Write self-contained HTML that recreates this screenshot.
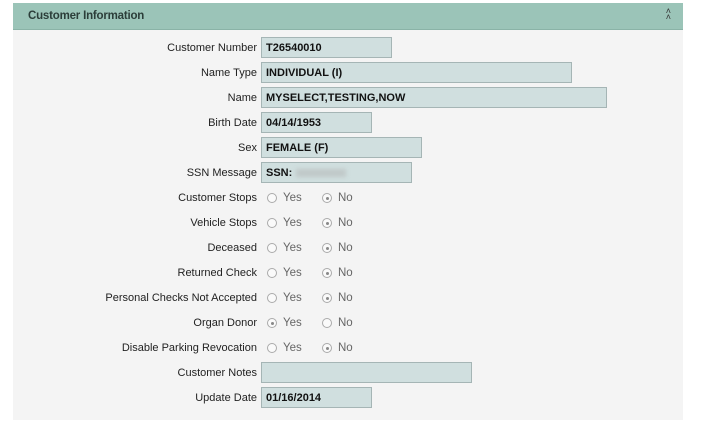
<!DOCTYPE html>
<html><head><meta charset="utf-8"><style>
html,body{margin:0;padding:0;background:#fff;width:702px;height:433px;overflow:hidden;font-family:"Liberation Sans",sans-serif;}
.panel{position:absolute;left:13px;top:3px;width:670px;height:417px;background:#f4f4f4;}
.hdr{height:26px;background:#9bc4b8;border-bottom:1px solid #8ab3a7;position:relative;}
.hdr span{position:absolute;left:15px;top:7px;font-size:11.5px;font-weight:bold;color:#2c3e3a;letter-spacing:-0.2px;}
.hdr i{position:absolute;right:12px;top:5px;font-style:normal;font-size:9px;color:#333;line-height:6px;}
.row{position:absolute;left:0;width:670px;height:21px;}
.lbl{position:absolute;left:4px;width:240px;text-align:right;font-size:11px;color:#222;top:5px;white-space:nowrap;}
.inp{position:absolute;left:248px;top:0;background:#d0dfdf;border:1px solid #a5b5b5;font-size:11px;font-weight:bold;color:#111;line-height:20px;padding-left:4px;box-sizing:border-box;height:21px;}
.rad{position:absolute;top:6px;width:10px;height:10px;border:1px solid #aaa;border-radius:50%;background:#fafafa;box-sizing:border-box;}
.rad.on::after{content:"";position:absolute;left:2.5px;top:2.5px;width:3px;height:3px;border-radius:50%;background:#888;}
.rt{position:absolute;top:5px;font-size:11.5px;color:#666;}
.blur{display:inline-block;width:50px;height:8px;background:#c0c8c8;filter:blur(2px);vertical-align:middle;margin-left:4px;}
</style></head><body>
<div class="panel">
<div class="hdr"><span>Customer Information</span><i>˄<br>˄</i></div>
<div class="row" style="top:34px"><div class="lbl">Customer Number</div><div class="inp" style="width:131px">T26540010</div></div>
<div class="row" style="top:59px"><div class="lbl">Name Type</div><div class="inp" style="width:311px">INDIVIDUAL (I)</div></div>
<div class="row" style="top:84px"><div class="lbl">Name</div><div class="inp" style="width:346px">MYSELECT,TESTING,NOW</div></div>
<div class="row" style="top:109px"><div class="lbl">Birth Date</div><div class="inp" style="width:111px">04/14/1953</div></div>
<div class="row" style="top:134px"><div class="lbl">Sex</div><div class="inp" style="width:161px">FEMALE (F)</div></div>
<div class="row" style="top:159px"><div class="lbl">SSN Message</div><div class="inp" style="width:151px">SSN:<span class="blur"></span></div></div>

<div class="row" style="top:184px"><div class="lbl">Customer Stops</div><div class="rad" style="left:254px"></div><div class="rt" style="left:270px">Yes</div><div class="rad on" style="left:309px"></div><div class="rt" style="left:325px">No</div></div>
<div class="row" style="top:209px"><div class="lbl">Vehicle Stops</div><div class="rad" style="left:254px"></div><div class="rt" style="left:270px">Yes</div><div class="rad on" style="left:309px"></div><div class="rt" style="left:325px">No</div></div>
<div class="row" style="top:234px"><div class="lbl">Deceased</div><div class="rad" style="left:254px"></div><div class="rt" style="left:270px">Yes</div><div class="rad on" style="left:309px"></div><div class="rt" style="left:325px">No</div></div>
<div class="row" style="top:259px"><div class="lbl">Returned Check</div><div class="rad" style="left:254px"></div><div class="rt" style="left:270px">Yes</div><div class="rad on" style="left:309px"></div><div class="rt" style="left:325px">No</div></div>
<div class="row" style="top:284px"><div class="lbl">Personal Checks Not Accepted</div><div class="rad" style="left:254px"></div><div class="rt" style="left:270px">Yes</div><div class="rad on" style="left:309px"></div><div class="rt" style="left:325px">No</div></div>
<div class="row" style="top:309px"><div class="lbl">Organ Donor</div><div class="rad on" style="left:254px"></div><div class="rt" style="left:270px">Yes</div><div class="rad" style="left:309px"></div><div class="rt" style="left:325px">No</div></div>
<div class="row" style="top:334px"><div class="lbl">Disable Parking Revocation</div><div class="rad" style="left:254px"></div><div class="rt" style="left:270px">Yes</div><div class="rad on" style="left:309px"></div><div class="rt" style="left:325px">No</div></div>

<div class="row" style="top:359px"><div class="lbl">Customer Notes</div><div class="inp" style="width:211px"></div></div>
<div class="row" style="top:384px"><div class="lbl">Update Date</div><div class="inp" style="width:111px">01/16/2014</div></div>
</div>
</body></html>
